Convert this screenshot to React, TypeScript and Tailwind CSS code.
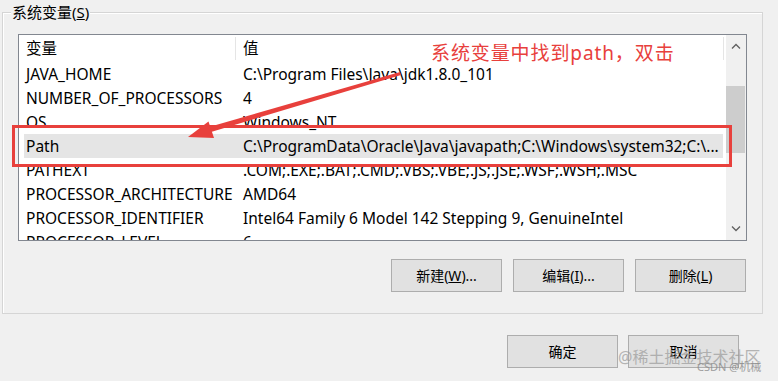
import React from "react";

const rows: [string, string][] = [
  ["JAVA_HOME", "C:\\Program Files\\Java\\jdk1.8.0_101"],
  ["NUMBER_OF_PROCESSORS", "4"],
  ["OS", "Windows_NT"],
  ["Path", "C:\\ProgramData\\Oracle\\Java\\javapath;C:\\Windows\\system32;C:\\..."],
  ["PATHEXT", ".COM;.EXE;.BAT;.CMD;.VBS;.VBE;.JS;.JSE;.WSF;.WSH;.MSC"],
  ["PROCESSOR_ARCHITECTURE", "AMD64"],
  ["PROCESSOR_IDENTIFIER", "Intel64 Family 6 Model 142 Stepping 9, GenuineIntel"],
  ["PROCESSOR_LEVEL", "6"],
];

function Btn({ children }: { children: React.ReactNode }) {
  return (
    <div className="w-[111px] h-[33px] bg-[#e1e1e1] border border-[#adadad] flex items-center justify-center text-[14px] text-black">
      {children}
    </div>
  );
}

export default function App() {
  return (
    <div className="w-[778px] h-[381px] bg-[#f0f0f0] relative overflow-hidden font-['Noto_Sans','Noto_Sans_CJK_SC',sans-serif] text-black">
      {/* Group box */}
      <div className="ml-[2px] mt-[12px] w-[761px] h-[302px] border border-[#d5d5d5] shadow-[inset_1px_1px_0_#ffffff] relative pt-[21px] pl-[15px] pr-[15px]">
        <div className="absolute left-[8px] top-[-11px] px-[1px] bg-[#f0f0f0] text-[15px] leading-[20px]">
          系统变量(<span className="underline">S</span>)
        </div>
        {/* List box */}
        <div className="h-[207px] border border-[#828790] bg-white flex">
          <div className="flex-1 flex flex-col overflow-hidden text-[15.5px]">
            <div className="h-[27px] shrink-0 flex ml-[5px] mr-[2px]">
              <div className="w-[212px] pl-[2px] pt-[1px] flex items-center border-r border-[#e5e5e5] my-[2px]">变量</div>
              <div className="flex-1 pl-[7px] pt-[1px] flex items-center border-r border-[#e5e5e5] my-[2px]">值</div>
            </div>
            {rows.map(([k, v]) => (
              <div
                key={k}
                className={
                  "h-[24px] shrink-0 flex items-center pt-[2px] ml-[5px] mr-[3px] whitespace-nowrap " +
                  (k === "Path" ? "bg-[#e5e5e5]" : "")
                }
              >
                <div className="w-[212px] pl-[2px] overflow-hidden">{k}</div>
                <div className="flex-1 pl-[7px] overflow-hidden">{v}</div>
              </div>
            ))}
          </div>
          {/* Scrollbar */}
          <div className="w-[20px] bg-[#f0f0f0] flex flex-col">
            <div className="h-[22px] flex items-center justify-center">
              <svg width="10" height="6" viewBox="0 0 10 6">
                <path d="M1 5.5 L5 1.5 L9 5.5" fill="none" stroke="#606060" strokeWidth="1.3" />
              </svg>
            </div>
            <div className="h-[29px]" />
            <div className="h-[67px] bg-[#cdcdcd] mr-[1px]" />
            <div className="flex-1" />
            <div className="h-[22px] flex items-center justify-center">
              <svg width="10" height="6" viewBox="0 0 10 6">
                <path d="M1 0.5 L5 4.5 L9 0.5" fill="none" stroke="#606060" strokeWidth="1.3" />
              </svg>
            </div>
          </div>
        </div>
        {/* Buttons */}
        <div className="mt-[18px] flex justify-end gap-[11px] mr-[1px]">
          <Btn>
            新建(<span className="underline">W</span>)...
          </Btn>
          <Btn>
            编辑(<span className="underline">I</span>)...
          </Btn>
          <Btn>
            删除(<span className="underline">L</span>)
          </Btn>
        </div>
      </div>

      {/* Dialog buttons */}
      <div className="mt-[21px] flex justify-end gap-[10px] pr-[39px]">
        <Btn>确定</Btn>
        <Btn>取消</Btn>
      </div>

      {/* Annotation overlay */}
      <div className="absolute left-[431px] top-[41px] text-[19px] leading-[24px] tracking-[0.9px] text-[#e8403c] whitespace-nowrap">
        系统变量中找到path，双击
      </div>
      <div className="absolute left-[12px] top-[125px] w-[720px] h-[42px] border-[3px] border-[#e8403c]" />
      <svg className="absolute left-0 top-0" width="778" height="381" viewBox="0 0 778 381">
        <polygon points="400,72 401,75 211,132 209,127" fill="#e8403c" />
        <polygon points="188,137 214,138 208.5,121.5" fill="#e8403c" />
      </svg>

      {/* Watermark */}
      <div className="absolute left-[618px] top-[347px] text-[16px] leading-[20px] text-[#9a9a9a] opacity-70 whitespace-nowrap">
        @稀土掘金技术社区
      </div>
      <div className="absolute left-[697px] top-[360px] text-[11px] leading-[14px] text-[#8a8a8a] opacity-80 whitespace-nowrap">
        CSDN @机械
      </div>
    </div>
  );
}
